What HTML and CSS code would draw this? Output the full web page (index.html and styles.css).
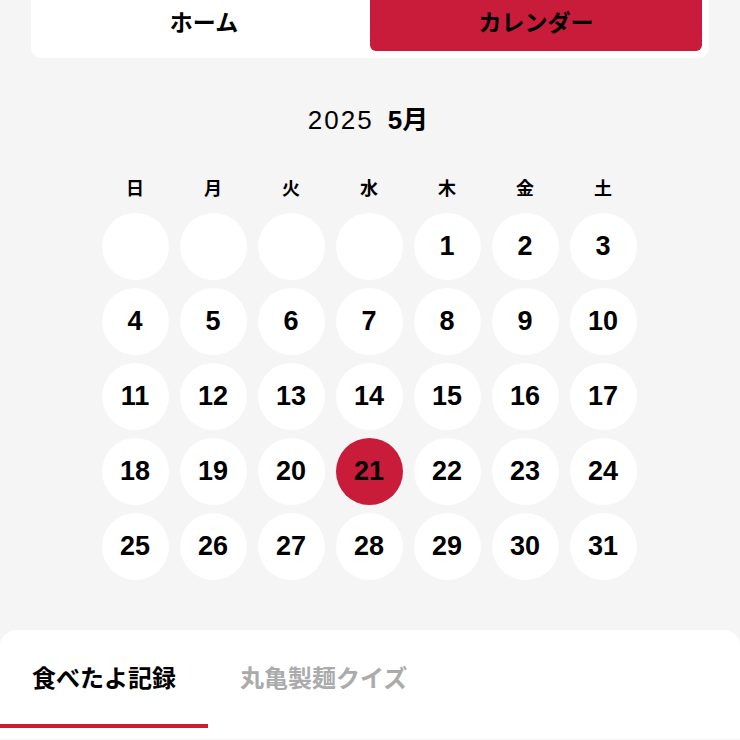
FILE: index.html
```html
<!DOCTYPE html>
<html lang="ja">
<head>
<meta charset="utf-8">
<link rel="stylesheet" href="styles.css">
</head>
<body>
<div class="switch">
  <div class="switch-btn">ホーム</div>
  <div class="switch-btn active">カレンダー</div>
</div>

<div class="month"><span class="year">2025</span><span class="mon">5月</span></div>

<div class="weekdays">
  <div>日</div><div>月</div><div>火</div><div>水</div><div>木</div><div>金</div><div>土</div>
</div>

<div class="days">
  <div class="day"></div><div class="day"></div><div class="day"></div><div class="day"></div>
  <div class="day">1</div><div class="day">2</div><div class="day">3</div>
  <div class="day">4</div><div class="day">5</div><div class="day">6</div><div class="day">7</div>
  <div class="day">8</div><div class="day">9</div><div class="day">10</div>
  <div class="day">11</div><div class="day">12</div><div class="day">13</div><div class="day">14</div>
  <div class="day">15</div><div class="day">16</div><div class="day">17</div>
  <div class="day">18</div><div class="day">19</div><div class="day">20</div><div class="day today">21</div>
  <div class="day">22</div><div class="day">23</div><div class="day">24</div>
  <div class="day">25</div><div class="day">26</div><div class="day">27</div><div class="day">28</div>
  <div class="day">29</div><div class="day">30</div><div class="day">31</div>
</div>

<div class="sheet">
  <div class="tabs">
    <div class="tab active">食べたよ記録</div>
    <div class="tab">丸亀製麺クイズ</div>
  </div>
</div>
</body>
</html>
```

FILE: styles.css
```css
html, body {
  margin: 0;
  padding: 0;
  background: #f5f5f5;
  height: 740px;
  overflow: hidden;
  font-family: "Liberation Sans", "Noto Sans CJK JP", sans-serif;
  color: #000;
}

.switch {
  display: flex;
  margin: -16px 31px 0;
  padding: 7px;
  background: #fff;
  border-radius: 10px;
}

.switch-btn {
  flex: 1;
  height: 60px;
  display: flex;
  align-items: center;
  justify-content: center;
  font-size: 23px;
  font-weight: 700;
  font-family: "Noto Sans CJK JP", sans-serif;
  border-radius: 6px;
}

.switch-btn.active {
  background: #c81c3a;
}

.month {
  margin-top: 46px;
  height: 32px;
  line-height: 32px;
  display: flex;
  justify-content: center;
  gap: 14px;
  font-size: 26px;
  padding-right: 4px;
}

.year {
  letter-spacing: 2px;
}

.mon {
  font-weight: 700;
}

.weekdays {
  margin: 39px 0 0 96px;
  width: 546px;
  display: grid;
  grid-template-columns: repeat(7, 78px);
  font-family: "Noto Sans CJK JP", sans-serif;
  font-size: 18px;
  font-weight: 700;
  line-height: 24px;
  height: 24px;
  text-align: center;
}

.days {
  margin: 14px 0 0 96px;
  width: 546px;
  display: grid;
  grid-template-columns: repeat(7, 78px);
  row-gap: 8px;
  justify-items: center;
}

.day {
  width: 67px;
  height: 67px;
  border-radius: 50%;
  background: #fff;
  display: flex;
  align-items: center;
  justify-content: center;
  font-size: 27px;
  font-weight: 700;
}

.day.today {
  background: #c81c3a;
}

.sheet {
  margin-top: 50px;
  background: #fff;
  border-radius: 16px 16px 0 0;
  height: 109px;
}

.tabs {
  display: flex;
}

.tab {
  padding: 33px 32px;
  line-height: 28px;
  font-size: 24px;
  font-weight: 700;
  font-family: "Noto Sans CJK JP", sans-serif;
  color: #ababab;
  border-bottom: 4px solid transparent;
}

.tab.active {
  color: #000;
  border-bottom-color: #c81c3a;
}
```
